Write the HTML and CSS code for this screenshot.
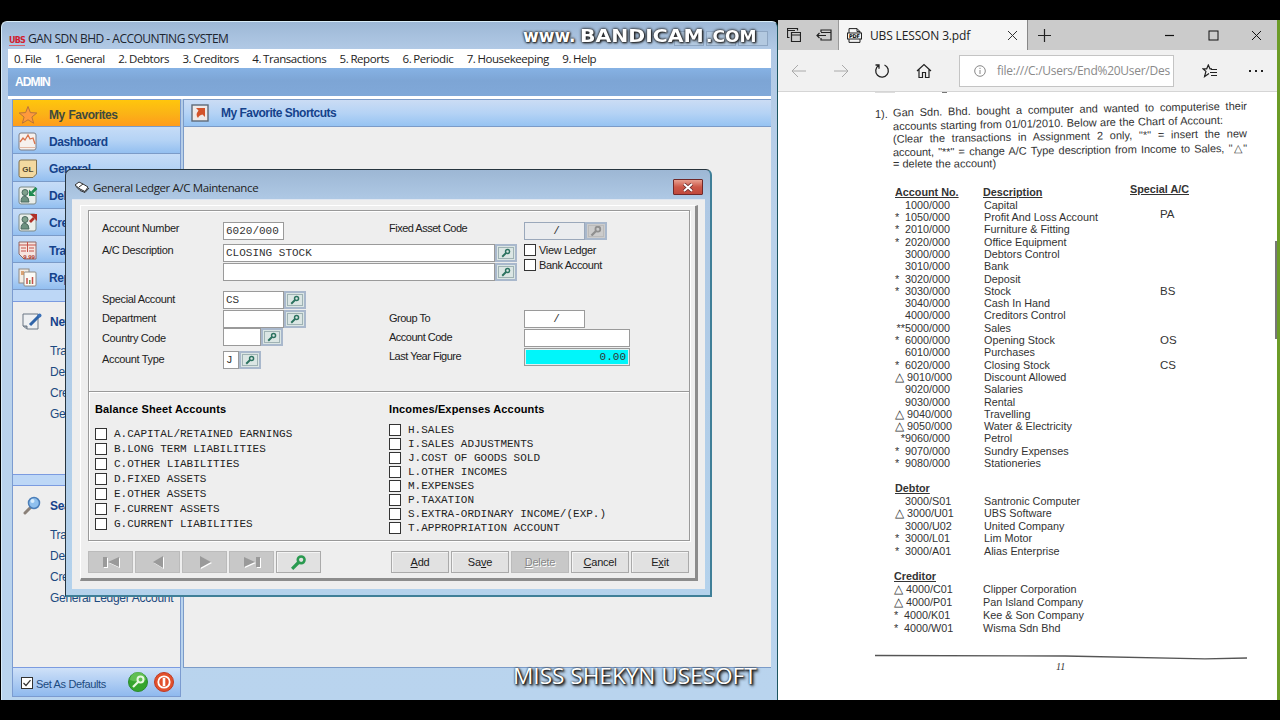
FILE: index.html
```html
<!DOCTYPE html>
<html lang="en">
<head>
  <meta charset="UTF-8" />
  <meta name="viewport" content="width=device-width, initial-scale=1.0" />
  <title>GAN SDN BHD - ACCOUNTING SYSTEM</title>
  <link rel="stylesheet" href="styles.css">
</head>
<body>

  <!-- Shared icons -->
  <svg class="defs" width="0" height="0">
    <symbol id="key" viewBox="0 0 16 16">
      <circle cx="10.5" cy="5.5" r="3.2" fill="none" stroke="currentColor" stroke-width="2.4" />
      <path d="M8 8 L2 14" fill="none" stroke="currentColor" stroke-width="3" />
    </symbol>
  </svg>

  <!-- Accounting window -->
  <div class="app">
    <div class="app-title">
      <span class="ubs">UBS</span>
      <span class="app-name">GAN SDN BHD - ACCOUNTING SYSTEM</span>
      <span class="win-buttons"><i></i><i></i><i></i></span>
    </div>
    <div class="menu">
      <span>0. File</span>
      <span>1. General</span>
      <span>2. Debtors</span>
      <span>3. Creditors</span>
      <span>4. Transactions</span>
      <span>5. Reports</span>
      <span>6. Periodic</span>
      <span>7. Housekeeping</span>
      <span>9. Help</span>
    </div>
    <div class="admin">ADMIN</div>
    <div class="workspace">
      <div class="sidebar">
        <div class="nav active">
          <svg width="20" height="20" viewBox="0 0 20 20"><path d="M10 1.5 L12.4 7.6 L18.8 8 L13.9 12 L15.6 18.2 L10 14.8 L4.4 18.2 L6.1 12 L1.2 8 L7.6 7.6 Z" fill="#ff9a3c" stroke="#b8743a" /></svg>
          My Favorites
        </div>
        <div class="nav">
          <svg width="20" height="20" viewBox="0 0 20 20"><rect x="1" y="1" width="17" height="17" rx="2" fill="#f6f1ee" stroke="#7d7f88" /><path d="M2 10 L5 6 L7 8 L10 3 L12 7 L15 6 L17 12" fill="none" stroke="#d9734c" stroke-width="1.3" /><path d="M2 15.5 H17" stroke="#e3b9a5" /></svg>
          Dashboard
        </div>
        <div class="nav">
          <svg width="20" height="20" viewBox="0 0 20 20"><path d="M3 1 H18.5 V15 L15 18.5 H3 Q1 18.5 1 16.5 V3 Q1 1 3 1 Z" fill="#f3d9a0" stroke="#80714f" /><text x="9.8" y="12.5" text-anchor="middle" class="gl">GL</text></svg>
          General
        </div>
        <div class="nav">
          <svg width="20" height="20" viewBox="0 0 20 20"><rect x="1" y="1" width="17" height="17" rx="2" fill="#e9eeea" stroke="#7d8a88" /><circle cx="7" cy="6.5" r="3" fill="#7fa08c" stroke="#4b6a60" /><path d="M3 16 Q3 10 7 10 Q11 11 11 16 Z" fill="#6d9180" stroke="#4b6a60" /><path d="M18.5 2 L14 6.5" stroke="#1f8a50" stroke-width="2.6" /><path d="M11 3.5 V10 H17.5 Z" fill="#1f8a50" /></svg>
          Debtors
        </div>
        <div class="nav">
          <svg width="20" height="20" viewBox="0 0 20 20"><rect x="1" y="1" width="17" height="17" rx="2" fill="#e9eeea" stroke="#7d8a88" /><circle cx="7" cy="6.5" r="3" fill="#7fa08c" stroke="#4b6a60" /><path d="M3 16 Q3 10 7 10 Q11 11 11 16 Z" fill="#6d9180" stroke="#4b6a60" /><path d="M12 9 L16 5" stroke="#b03028" stroke-width="2.6" /><path d="M12 1 H19 V8 Z" fill="#b03028" /></svg>
          Creditors
        </div>
        <div class="nav">
          <svg width="20" height="20" viewBox="0 0 20 20"><path d="M1 1 H18 V18 H6 L1 13 Z" fill="#f6e5e0" stroke="#8d6a68" /><path d="M1 4 H18 M9.5 1 V11 M3 7 H8 M11 7 H16 M3 10 H8 M11 10 H16" stroke="#c4524a" /><text x="11" y="17.5" text-anchor="middle" class="num">9.99</text></svg>
          Transactions
        </div>
        <div class="nav">
          <svg width="20" height="20" viewBox="0 0 20 20"><rect x="1" y="1" width="10" height="14" fill="#f5eee6" stroke="#8f8a84" /><rect x="6" y="4" width="12" height="14" rx="1" fill="#fbfaf6" stroke="#8f8a84" /><path d="M3 4 H6 M3 6 H6" stroke="#d08a50" stroke-width="1.5" /><path d="M9 16 V10 M14.5 16 V9" stroke="#c4524a" stroke-width="1.5" /><path d="M11.8 16 V12" stroke="#6b9a50" stroke-width="1.5" /></svg>
          Reports
        </div>
        <div class="band"></div>
        <div class="links new">
          <div class="links-head">
            <svg width="22" height="20" viewBox="0 0 22 20"><path d="M2 2 H17 V17 H6 L2 14 Z" fill="#eef0f2" stroke="#6a7684" /><path d="M2 14 H6 V17" fill="#99a3ad" stroke="#6a7684" /><path d="M9 13 L18 4" stroke="#2f64a8" stroke-width="3" /><circle cx="18.5" cy="3.5" r="2" fill="#3d72b8" /></svg>
            New
          </div>
          <span>Transactions</span>
          <span>Debtor</span>
          <span>Creditor</span>
          <span>General</span>
        </div>
        <div class="band low"></div>
        <div class="links search">
          <div class="links-head">
            <svg width="22" height="20" viewBox="0 0 22 20"><path d="M4 17 L10 11" stroke="#8a8078" stroke-width="3" stroke-linecap="round" /><circle cx="13" cy="7" r="5.5" fill="#8fc0ee" stroke="#4b7eb8" stroke-width="1.5" /><circle cx="11.5" cy="5" r="2" fill="#d8ecfc" /></svg>
            Search
          </div>
          <span>Transactions</span>
          <span>Debtor</span>
          <span>Creditor</span>
          <span>General Ledger Account</span>
        </div>
        <div class="defaults">
          <svg class="tick" width="12" height="12" viewBox="0 0 12 12"><rect x=".5" y=".5" width="11" height="11" fill="#fff" stroke="#333" /><path d="M2.5 6 L5 8.5 L9.5 3.2" fill="none" stroke="#333" stroke-width="1.2" /></svg>
          <span class="defaults-text">Set As Defaults</span>
          <svg width="20" height="20" viewBox="0 0 20 20"><circle cx="10" cy="10" r="9.5" fill="#35a52c" stroke="#2a8a30" /><path d="M2 8 A8 8 0 0 1 18 8 Q10 11 2 8" fill="#7fd06c" opacity=".6" /><circle cx="12.5" cy="7.5" r="3" fill="none" stroke="#e8f8e0" stroke-width="2" /><path d="M10.3 9.7 L5 15" stroke="#e8f8e0" stroke-width="2.2" /></svg>
          <svg width="20" height="20" viewBox="0 0 20 20"><circle cx="10" cy="10" r="9.5" fill="#e2502c" stroke="#c03a24" /><circle cx="10" cy="10" r="5.7" fill="none" stroke="#fff" stroke-width="1.8" /><path d="M10 6 V14" stroke="#fff" stroke-width="2.6" /></svg>
        </div>
      </div>
      <div class="main">
        <div class="main-head">
          <svg width="18" height="18" viewBox="0 0 18 18"><rect x="1" y="1" width="16" height="16" fill="#efe9e8" stroke="#5f6a78" stroke-width="1.4" /><path d="M5 4 H14 V13 L11.5 10.5 Q8 11 7 14 Q4 11 7.5 6.6 Z" fill="#d3532a" /></svg>
          My Favorite Shortcuts
        </div>
      </div>
    </div>
  </div>

  <!-- General Ledger dialog -->
  <div class="dialog">
    <div class="dialog-title">
      <svg width="16" height="12" viewBox="0 0 16 12"><path d="M1 4 L5 1 L9 3 L14 6 L11 10.5 L6 8 Z" fill="#fff" stroke="#333" /><path d="M5 6 L9 3 M2 5.5 L6 9.5 L11 11.5 L15 7" fill="none" stroke="#333" /></svg>
      <span>General Ledger A/C Maintenance</span>
      <div class="close"><svg width="12" height="9" viewBox="0 0 12 9"><path d="M2 1 L10 8 M10 1 L2 8" stroke="#6b2a2a" stroke-width="3.6" /><path d="M2 1 L10 8 M10 1 L2 8" stroke="#fff" stroke-width="2" /></svg></div>
    </div>
    <div class="dialog-body">
      <div class="panel">
        <div class="frame">
          <div class="form">
            <label class="l1">Account Number</label>
            <div class="row"><div class="field w61">6020/000</div></div>
            <label class="l1 c3">Fixed Asset Code</label>
            <div class="row"><div class="field w61 off center">/</div><div class="find off"><svg width="12" height="12"><use href="#key" /></svg></div></div>

            <label class="l2">A/C Description</label>
            <div class="row wide"><div class="field grow">CLOSING STOCK</div><div class="find"><svg width="10" height="10"><use href="#key" /></svg></div></div>
            <div class="flags">
              <div><i class="box"></i>View Ledger</div>
              <div><i class="box"></i>Bank Account</div>
            </div>
            <div class="row wide second"><div class="field grow"></div><div class="find"><svg width="10" height="10"><use href="#key" /></svg></div></div>

            <label class="l4">Special Account</label>
            <div class="row r4"><div class="field w61">CS</div><div class="find"><svg width="10" height="10"><use href="#key" /></svg></div></div>
            <label class="l5">Department</label>
            <div class="row r5"><div class="field w61"></div><div class="find"><svg width="10" height="10"><use href="#key" /></svg></div></div>
            <label class="l6">Country Code</label>
            <div class="row r6"><div class="field w38"></div><div class="find"><svg width="10" height="10"><use href="#key" /></svg></div></div>
            <label class="l7">Account Type</label>
            <div class="row r7"><div class="field w16">J</div><div class="find"><svg width="10" height="10"><use href="#key" /></svg></div></div>

            <div class="group">
              <label>Group To</label><div class="field w61 center">/</div>
              <label>Account Code</label><div class="field w106"></div>
              <label>Last Year Figure</label><div class="field w106 figure">0.00</div>
            </div>
          </div>
          <div class="types">
            <div class="balance">
              <h3>Balance Sheet Accounts</h3>
              <div><i class="box"></i>A.CAPITAL/RETAINED EARNINGS</div>
              <div><i class="box"></i>B.LONG TERM LIABILITIES</div>
              <div><i class="box"></i>C.OTHER LIABILITIES</div>
              <div><i class="box"></i>D.FIXED ASSETS</div>
              <div><i class="box"></i>E.OTHER ASSETS</div>
              <div><i class="box"></i>F.CURRENT ASSETS</div>
              <div><i class="box"></i>G.CURRENT LIABILITIES</div>
            </div>
            <div class="income">
              <h3>Incomes/Expenses Accounts</h3>
              <div><i class="box"></i>H.SALES</div>
              <div><i class="box"></i>I.SALES ADJUSTMENTS</div>
              <div><i class="box"></i>J.COST OF GOODS SOLD</div>
              <div><i class="box"></i>L.OTHER INCOMES</div>
              <div><i class="box"></i>M.EXPENSES</div>
              <div><i class="box"></i>P.TAXATION</div>
              <div><i class="box"></i>S.EXTRA-ORDINARY INCOME/(EXP.)</div>
              <div><i class="box"></i>T.APPROPRIATION ACCOUNT</div>
            </div>
          </div>
        </div>
        <div class="buttons">
          <div class="btn nav-btn"><svg width="20" height="12" viewBox="0 0 20 12"><path d="M2 1 H6 V11 H2 Z M18 1 V11 L7 6 Z" /></svg></div>
          <div class="btn nav-btn"><svg width="20" height="12" viewBox="0 0 20 12"><path d="M15 0 V12 L5 6 Z" /></svg></div>
          <div class="btn nav-btn"><svg width="20" height="12" viewBox="0 0 20 12"><path d="M5 0 V12 L16 6 Z" /></svg></div>
          <div class="btn nav-btn"><svg width="20" height="12" viewBox="0 0 20 12"><path d="M18 1 H14 V11 H18 Z M2 1 V11 L13 6 Z" /></svg></div>
          <div class="btn key-btn"><svg width="17" height="17"><use href="#key" /></svg></div>
          <div class="btn first"><span><u>A</u>dd</span></div>
          <div class="btn"><span>Sa<u>v</u>e</span></div>
          <div class="btn disabled"><span><u>D</u>elete</span></div>
          <div class="btn"><span><u>C</u>ancel</span></div>
          <div class="btn"><span>E<u>x</u>it</span></div>
        </div>
      </div>
    </div>
  </div>

  <!-- Browser with the lesson -->
  <div class="browser">
    <div class="tabs">
      <div class="tab-tools">
        <svg width="14" height="14" viewBox="0 0 14 14"><path d="M2.5 9.5 H.5 V.5 H10.5 V2.5 M.5 2.5 H8 M4.5 4.5 H13.5 V13.5 H4.5 Z M4.5 7 H13.5" fill="none" stroke="#222" stroke-width="1.2" /></svg>
        <svg width="16" height="12" viewBox="0 0 16 12"><path d="M5 3 V1 H15 V11 H5 V9 M5 3.5 H15 M1 6.5 H10 M3.5 4 L1 6.5 L3.5 9" fill="none" stroke="#222" stroke-width="1.2" /></svg>
      </div>
      <div class="tab">
        <svg width="15" height="15" viewBox="0 0 15 15"><path d="M2 5 V.6 H10 L13 3.6 V5 M2 11 V14.4 H13 V11 M10 .6 V3.6 H13" fill="none" stroke="#222" /><rect x=".5" y="5" width="14" height="6" fill="#f5f5f5" stroke="#222" /><text x="7.5" y="10" text-anchor="middle" class="pdf">PDF</text></svg>
        <span>UBS LESSON 3.pdf</span>
        <svg class="x" width="11" height="11" viewBox="0 0 11 11"><path d="M1 1 L10 10 M10 1 L1 10" stroke="#333" /></svg>
      </div>
      <svg class="plus" width="13" height="13" viewBox="0 0 13 13"><path d="M6.5 0 V13 M0 6.5 H13" stroke="#222" stroke-width="1.2" /></svg>
      <div class="win">
        <svg width="11" height="11" viewBox="0 0 11 11"><path d="M1 5.5 H10" stroke="#111" stroke-width="1.2" /></svg>
        <svg width="11" height="11" viewBox="0 0 11 11"><rect x="1" y="1" width="9" height="9" fill="none" stroke="#111" /></svg>
        <svg width="11" height="11" viewBox="0 0 11 11"><path d="M1 1 L10 10 M10 1 L1 10" stroke="#111" /></svg>
      </div>
    </div>
    <div class="toolbar">
      <svg width="16" height="14" viewBox="0 0 16 14"><path d="M15 7 H1 M7 1 L1 7 L7 13" fill="none" stroke="#aaa" /></svg>
      <svg width="16" height="14" viewBox="0 0 16 14"><path d="M1 7 H15 M9 1 L15 7 L9 13" fill="none" stroke="#aaa" /></svg>
      <svg width="16" height="16" viewBox="0 0 16 16"><path d="M10.5 2 A6.3 6.3 0 1 1 4.6 2.5 M1.5 2 H5 V5.7" fill="none" stroke="#222" stroke-width="1.3" /></svg>
      <svg width="16" height="16" viewBox="0 0 16 16"><path d="M1 8 L8 1.5 L15 8 M3 6.5 V14.5 H6.5 V9.5 H9.5 V14.5 H13 V6.5" fill="none" stroke="#222" stroke-width="1.2" /></svg>
      <div class="address">
        <svg width="12" height="12" viewBox="0 0 12 12"><circle cx="6" cy="6" r="5.3" fill="none" stroke="#888" /><path d="M6 5 V9 M6 2.8 V4" stroke="#888" /></svg>
        <span>file:///C:/Users/End%20User/Des</span>
      </div>
      <svg class="fav" width="16" height="14" viewBox="0 0 16 14"><path d="M10 4.8 H8 L6.3 1 L4.7 4.8 H1 L3.9 7.4 L2.6 12.5 L7 9.5" fill="none" stroke="#222" stroke-width="1.2" /><path d="M9 5.5 H15 M8 8.5 H15 M9 11.5 H15" stroke="#222" stroke-width="1.2" /></svg>
      <span class="dots"><i></i><i></i><i></i></span>
    </div>
    <div class="page">
      <div class="cut"><i></i><i></i></div>
      <div class="question">
        <span class="no">1).</span>
        <div class="lines">
          <p class="p1">Gan Sdn. Bhd. bought a computer and wanted to computerise their</p>
          <p class="p2">accounts starting from 01/01/2010. Below are the Chart of Account:</p>
          <p class="p3">(Clear the transactions in Assignment 2 only, "*" = insert the new</p>
          <p class="p4">account, "**" = change A/C Type description from Income to Sales, "△"</p>
          <p class="p5">= delete the account)</p>
        </div>
      </div>
      <div class="accounts chart">
        <div class="acc head"><b></b><b><u>Account No.</u></b><b><u>Description</u></b><b class="special"><u>Special A/C</u></b></div>
        <div class="acc"><i></i><span>1000/000</span><span>Capital</span></div>
        <div class="acc"><i>*</i><span>1050/000</span><span>Profit And Loss Account</span><span class="code pa">PA</span></div>
        <div class="acc"><i>*</i><span>2010/000</span><span>Furniture &amp; Fitting</span></div>
        <div class="acc"><i>*</i><span>2020/000</span><span>Office Equipment</span></div>
        <div class="acc"><i></i><span>3000/000</span><span>Debtors Control</span></div>
        <div class="acc"><i></i><span>3010/000</span><span>Bank</span></div>
        <div class="acc"><i>*</i><span>3020/000</span><span>Deposit</span></div>
        <div class="acc"><i>*</i><span>3030/000</span><span>Stock</span><span class="code">BS</span></div>
        <div class="acc"><i></i><span>3040/000</span><span>Cash In Hand</span></div>
        <div class="acc"><i></i><span>4000/000</span><span>Creditors Control</span></div>
        <div class="acc"><i class="tight">**</i><span>5000/000</span><span>Sales</span></div>
        <div class="acc"><i>*</i><span>6000/000</span><span>Opening Stock</span><span class="code">OS</span></div>
        <div class="acc"><i></i><span>6010/000</span><span>Purchases</span></div>
        <div class="acc"><i>*</i><span>6020/000</span><span>Closing Stock</span><span class="code">CS</span></div>
        <div class="acc"><i class="tri">△</i><span>9010/000</span><span>Discount Allowed</span></div>
        <div class="acc"><i></i><span>9020/000</span><span>Salaries</span></div>
        <div class="acc"><i></i><span>9030/000</span><span>Rental</span></div>
        <div class="acc"><i class="tri">△</i><span>9040/000</span><span>Travelling</span></div>
        <div class="acc"><i class="tri">△</i><span>9050/000</span><span>Water &amp; Electricity</span></div>
        <div class="acc"><i class="tight">*</i><span>9060/000</span><span>Petrol</span></div>
        <div class="acc"><i>*</i><span>9070/000</span><span>Sundry Expenses</span></div>
        <div class="acc"><i>*</i><span>9080/000</span><span>Stationeries</span></div>
      </div>
      <div class="accounts debtor">
        <div class="acc head"><b></b><b><u>Debtor</u></b></div>
        <div class="acc"><i></i><span>3000/S01</span><span>Santronic Computer</span></div>
        <div class="acc"><i class="tri">△</i><span>3000/U01</span><span>UBS Software</span></div>
        <div class="acc"><i></i><span>3000/U02</span><span>United Company</span></div>
        <div class="acc"><i>*</i><span>3000/L01</span><span>Lim Motor</span></div>
        <div class="acc"><i>*</i><span>3000/A01</span><span>Alias Enterprise</span></div>
      </div>
      <div class="accounts creditor">
        <div class="acc head"><b></b><b><u>Creditor</u></b></div>
        <div class="acc"><i class="tri">△</i><span>4000/C01</span><span>Clipper Corporation</span></div>
        <div class="acc"><i class="tri">△</i><span>4000/P01</span><span>Pan Island Company</span></div>
        <div class="acc"><i>*</i><span>4000/K01</span><span>Kee &amp; Son Company</span></div>
        <div class="acc"><i>*</i><span>4000/W01</span><span>Wisma Sdn Bhd</span></div>
      </div>
      <svg class="rule" width="373" height="6" viewBox="0 0 373 6"><path d="M0 1.5 L190 2 L330 4.8 L372 4" fill="none" stroke="#555" stroke-width="1.3" /></svg>
      <div class="page-no">11</div>
    </div>
    <div class="scroll"></div>
  </div>

  <!-- Watermarks -->
  <div class="bandicam"><span class="www">www.</span><span class="name">BANDICAM</span><span class="com">.COM</span></div>
  <div class="caption">MISS SHEKYN USESOFT</div>

</body>
</html>
```
FILE: styles.css
```css
* {
  box-sizing: border-box;
}

body {
  margin: 0;
  width: 1280px;
  height: 720px;
  position: relative;
  overflow: hidden;
  background: #000;
  font-family: "Liberation Sans", Arial, sans-serif;
  font-size: 11px;
  color: #222;
  white-space: nowrap;
}

i {
  font-style: normal;
}

svg {
  flex: none;
}

.defs {
  position: absolute;
}

/* Accounting window */
.app {
  position: absolute;
  left: 1px;
  top: 21px;
  width: 777px;
  height: 679px;
  padding: 0 6px 0 6px;
  background: linear-gradient(#9db8d6, #b2cae6 28px, #b9d1ea 200px, #b9d4ee);
  border: 1px solid #d8ecf8;
  border-right: 1px solid #1c5560;
  border-bottom: none;
  border-radius: 6px 6px 0 0;
  display: flex;
  flex-direction: column;
}

.app-title {
  height: 27px;
  display: flex;
  align-items: center;
  padding: 6px 0 0 1px;
  font-family: "Open Sans", "Noto Sans", sans-serif;
  font-size: 12px;
  color: #1d2530;
}

.ubs {
  width: 16px;
  height: 9px;
  margin-top: 5px;
  border-bottom: 1px solid #d8606a;
  color: #d0202e;
  font: bold 8px/8px "DejaVu Sans", sans-serif;
  letter-spacing: -0.8px;
}

.app-name {
  margin-left: 3px;
  letter-spacing: -0.5px;
}

.win-buttons {
  margin-left: auto;
  margin-right: 3px;
  display: flex;
  gap: 2px;
}

.win-buttons i {
  width: 30px;
  height: 15px;
  border: 1px solid #8ea6c2;
  background: #b3c9e0;
}

.menu {
  flex: none;
  height: 19px;
  background: #fff;
  display: flex;
  align-items: center;
  gap: 13.4px;
  padding-left: 6px;
  font-family: "Open Sans", "Noto Sans", sans-serif;
  font-size: 11.5px;
  letter-spacing: -0.43px;
  word-spacing: -0.5px;
}

.admin {
  flex: none;
  height: 28px;
  background: linear-gradient(#86b2e4, #7da5d5 45%, #80a8d8);
  color: #fff;
  font-size: 12px;
  font-weight: bold;
  line-height: 29px;
  padding-left: 7px;
  letter-spacing: -0.9px;
}

.workspace {
  flex: 1;
  display: flex;
  gap: 2px;
  padding: 2px 0 3px 4px;
  border-top: 1px solid #fff;
  background: linear-gradient(#fff 2px, transparent 2px);
}

.sidebar {
  width: 169px;
  border: 1px solid #7b9bd0;
  background: #eee;
  display: flex;
  flex-direction: column;
  color: #1c4a80;
}

.nav {
  flex: none;
  height: 27.2px;
  border-bottom: 1px solid #7b9bc8;
  background: linear-gradient(#c6dcf7, #b5d3f5 50%, #93bff0);
  display: flex;
  align-items: center;
  gap: 11px;
  padding: 3px 0 0 5px;
  font-size: 12px;
  font-weight: bold;
  letter-spacing: -0.45px;
  color: #15428b;
}

.nav.active {
  background: linear-gradient(#ffc60c, #fbb416 50%, #ff9c1c);
  color: #3f4a3c;
  letter-spacing: -0.5px;
  word-spacing: 1px;
}

.gl {
  font: bold 8px "Liberation Sans", sans-serif;
  letter-spacing: 0;
  fill: #4f4630;
}

.num {
  font: bold 6px "Liberation Sans", sans-serif;
  letter-spacing: 0;
  fill: #a83830;
}

.band {
  flex: none;
  height: 12px;
  background: #bdd7f6;
  border-bottom: 1px solid #7b9be0;
}

.band.low {
  border-top: 1px solid #7b9be0;
}

.links {
  height: 172px;
  padding-top: 9px;
  display: flex;
  flex-direction: column;
  font-size: 12px;
  letter-spacing: -0.28px;
}

.links.search {
  height: auto;
  flex: 1;
}

.links-head {
  height: 22px;
  display: flex;
  align-items: center;
  gap: 7px;
  padding-left: 8px;
  margin-bottom: 7.5px;
  font-weight: bold;
  color: #15428b;
}

.links span {
  padding-left: 37px;
  line-height: 21.2px;
}

.defaults {
  flex: none;
  height: 29px;
  border-top: 1px solid #7b9be0;
  background: linear-gradient(#cfe1f8, #8fb9ee);
  display: flex;
  align-items: center;
  padding-left: 8px;
}

.defaults-text {
  width: 92px;
  margin-left: 3px;
  padding-top: 3px;
  letter-spacing: -0.35px;
}

.defaults svg + svg {
  margin-left: 6px;
}

.tick {
  margin-top: 2px;
}

.main {
  flex: 1;
  margin-bottom: 29px;
  border: 1px solid #7b9bc8;
  border-right: none;
  background: #eee;
}

.main-head {
  height: 27px;
  border-bottom: 1px solid #7b9bc8;
  background: linear-gradient(#cbdcf4, #b5d3f5 50%, #96c3f2);
  display: flex;
  align-items: center;
  gap: 12px;
  padding-left: 7px;
  font-size: 12px;
  font-weight: bold;
  letter-spacing: -0.52px;
  color: #15428b;
}

/* General Ledger dialog */
.dialog {
  position: absolute;
  left: 65px;
  top: 169px;
  width: 647px;
  height: 428px;
  padding: 0 5px 6px 6px;
  border: 1px solid #26343e;
  border-right: 2px solid #3f7f98;
  border-bottom: 2px solid #3f7f98;
  border-radius: 6px 6px 0 0;
  background: linear-gradient(#9db7d4, #aec8e4 28px, #b4d2ec);
  display: flex;
  flex-direction: column;
}

.dialog-title {
  flex: none;
  height: 29px;
  padding: 5px 2px 0 2px;
  display: flex;
  align-items: center;
  gap: 3px;
  font-family: "Open Sans", "Noto Sans", sans-serif;
  font-size: 11.5px;
  letter-spacing: -0.38px;
}

.close {
  margin-left: auto;
  width: 30px;
  height: 16px;
  border: 1px solid #702828;
  border-radius: 1px;
  background: linear-gradient(#e8a090, #cc5848 50%, #c0483c);
  display: flex;
  align-items: center;
  justify-content: center;
}

.dialog-body {
  flex: 1;
  background: #eee;
  border-top: 1px solid #dfe6f0;
  padding: 5px 7px 8px 8px;
}

.panel {
  height: 376px;
  border: 1px solid #fff;
  border-right: 3px solid #8c8c8c;
  border-bottom: 3px solid #8c8c8c;
  padding: 4px 5px 0 7px;
  background: #eee;
}

.frame {
  height: 331px;
  border: 1px solid #999;
  box-shadow: inset 1px 1px 0 #fff, 1px 1px 0 #fff;
}

.form {
  height: 181px;
  border-bottom: 1px solid #999;
  box-shadow: 0 1px 0 #fff;
  padding: 11px 0 0 13px;
  display: grid;
  grid-template-columns: 121px 166px 135px 110px;
  grid-template-rows: 22px 19px 28px 19px 18px 23px 18px;
  align-items: start;
}

.form label,
.flags {
  line-height: 14px;
  letter-spacing: -0.35px;
}

.form label.c3,
.group label {
  letter-spacing: -0.5px;
}

.form .l1 {
  margin-top: -1px;
}

.l2 {
  margin-top: -1px;
}

.l4,
.l5,
.l7 {
  margin-top: 1px;
}

.l6 {
  margin-top: 3px;
}

.l4 { grid-area: 4 / 1; }
.l5 { grid-area: 5 / 1; }
.l6 { grid-area: 6 / 1; }
.l7 { grid-area: 7 / 1; }
.r4 { grid-area: 4 / 2; }
.r5 { grid-area: 5 / 2; }
.r6 { grid-area: 6 / 2; }
.r7 { grid-area: 7 / 2; }

.row {
  display: flex;
}

.row.wide {
  grid-column: 2 / 4;
  width: 294px;
}

.row.second {
  grid-row: 3;
}

.field {
  height: 18px;
  border: 1px solid #9a9a9a;
  background: #fff;
  font: 11px/17px "Liberation Mono", monospace;
  padding-left: 2px;
  color: #333;
}

.grow { flex: 1; }
.w61 { width: 61px; }
.w38 { width: 38px; }
.w16 { width: 16px; }
.w106 { width: 106px; }

.field.center {
  text-align: center;
  padding: 0 0 0 4px;
}

.field.off {
  background: #eaecef;
  border: 1px solid #9aa8bb;
}

.figure {
  background: #00f6fa;
  box-shadow: inset 0 0 0 1px #e0f0f0;
  text-align: right;
  padding-right: 3px;
}

.find {
  width: 22px;
  height: 18px;
  border: 2px solid #a9b8cc;
  background: #dbe6e4;
  outline: 1px solid #9fb2b4;
  outline-offset: -4px;
  color: #2c7360;
  display: flex;
  align-items: center;
  justify-content: center;
}

.find.off {
  background: #ccc;
  outline-color: #bbb;
  color: #8f8f8f;
}

.flags {
  grid-area: 2 / 4 / 4 / 5;
  margin-top: -2px;
}

.flags div {
  display: flex;
  align-items: center;
  gap: 3px;
  height: 15px;
}

.box {
  flex: none;
  width: 12px;
  height: 12px;
  border: 1px solid #333;
  background: #fff;
}

.group {
  grid-area: 5 / 3 / 8 / 5;
  display: grid;
  grid-template-columns: 135px 106px;
  row-gap: 1px;
}

.group label {
  margin-top: 1px;
}

.types {
  display: flex;
  padding: 10px 0 0 6px;
  font: 11px "Liberation Mono", monospace;
}

.types h3 {
  margin: 0;
  font: bold 11px/14px "Liberation Sans", sans-serif;
  letter-spacing: 0.15px;
  color: #000;
}

.types div div {
  display: flex;
  align-items: center;
  gap: 7px;
}

.balance {
  width: 294px;
}

.balance div {
  height: 15px;
}

.balance h3 {
  margin-bottom: 10px;
}

.income h3 {
  margin-bottom: 6.5px;
}

.income div {
  height: 14.1px;
}

.buttons {
  display: flex;
  padding: 10px 1px 0 0;
  gap: 2px;
  letter-spacing: -0.2px;
}

.btn {
  width: 58px;
  height: 22px;
  border: 1px solid #aaa;
  background: #e1e1e1;
  box-shadow: inset 1px 1px 0 #f4f4f4;
  display: flex;
  align-items: center;
  justify-content: center;
}

.btn.nav-btn,
.btn.key-btn {
  width: 45px;
}

.nav-btn,
.btn.disabled {
  background: #c8c8c8;
  border-color: #bbb;
  box-shadow: none;
  color: #888;
  text-shadow: 1px 1px 0 #fff;
}

.nav-btn svg {
  fill: #9a9a9a;
  filter: drop-shadow(1px 1px 0 #fff);
}

.key-btn {
  color: #2a9a50;
}

.btn.first {
  margin-left: auto;
}

/* Browser */
.browser {
  position: absolute;
  left: 778px;
  top: 20px;
  width: 502px;
  height: 680px;
  border-right: 3px solid #6c9c28;
  background: #fff;
  font-family: "Open Sans", "Noto Sans", sans-serif;
}

.tabs {
  height: 30px;
  background: #cbcbcb;
  display: flex;
  align-items: center;
}

.tab-tools {
  width: 61px;
  height: 30px;
  padding-left: 9px;
  border-right: 1px solid #999;
  display: flex;
  align-items: center;
  gap: 15px;
}

.tab {
  width: 189px;
  height: 30px;
  padding: 0 9px 0 8px;
  border-right: 1px solid #888;
  background: #f5f5f5;
  display: flex;
  align-items: center;
  gap: 8px;
  font-size: 12px;
  letter-spacing: -0.15px;
}

.pdf {
  font: bold 5px "DejaVu Sans", sans-serif;
}

.tab .x {
  margin-left: auto;
}

.plus {
  margin-left: 10px;
}

.win {
  margin-left: auto;
  margin-right: 15px;
  display: flex;
  gap: 32.5px;
}

.toolbar {
  height: 42px;
  border-bottom: 1px solid #d5d5d5;
  background: #f1f1f1;
  display: flex;
  align-items: center;
  padding-left: 13px;
  gap: 25.5px;
}

.address {
  width: 215px;
  height: 32px;
  margin-left: 2px;
  padding-left: 14px;
  border: 1px solid #c4c4c4;
  background: #fff;
  display: flex;
  align-items: center;
  gap: 11px;
  font-size: 12px;
  letter-spacing: -0.27px;
  color: #8a8a8a;
}

.fav {
  margin-left: 2px;
}

.dots {
  display: flex;
  gap: 4px;
  margin-left: 6px;
}

.dots i {
  width: 2px;
  height: 2px;
  background: #222;
}

.page {
  padding-left: 97px;
  font: 11px "Liberation Sans", sans-serif;
  color: #333;
}

.cut {
  height: 11px;
  display: flex;
  gap: 47px;
}

.cut i {
  width: 20px;
  height: 1px;
  background: #ddd;
}

.cut i + i {
  width: 5px;
  background: #777;
}

.question {
  display: flex;
}

.no {
  width: 18px;
  line-height: 23px;
}

.lines p {
  width: 354px;
  height: 13.5px;
  line-height: 13px;
  margin: 0;
  text-align-last: justify;
}

.lines .p1 { transform: rotate(-1.1deg); }
.lines .p2 { width: 330px; transform: rotate(-1.1deg); }
.lines .p3 { transform: rotate(-0.9deg); }
.lines .p4 { transform: rotate(-0.7deg); letter-spacing: -0.1px; }
.lines .p5 { text-align-last: left; transform: rotate(-0.2deg); }

.accounts {
  margin-top: 13px;
  padding-left: 19px;
  font-size: 10.8px;
}

.chart {
  margin-top: 15px;
}

.acc {
  display: grid;
  grid-template-columns: 11px 79px 146px 60px;
  height: 12.3px;
  line-height: 12px;
}

.chart .head {
  height: 13.3px;
}

.acc i {
  padding-left: 1px;
}

.acc .tight {
  text-align: right;
}

.acc .tri {
  font-size: 12px;
  padding-left: 1px;
}

.tri + span {
  padding-left: 2px;
}

.acc .code {
  padding-left: 30px;
  font-size: 11.5px;
}

.acc .pa {
  margin-top: -3px;
}

.acc.head b:nth-child(2) {
  margin-left: -10px;
}

.acc.head b:nth-child(3) {
  margin-left: -1px;
}

.acc.head .special {
  margin-top: -3px;
}

.debtor .acc {
  height: 12.5px;
}

.creditor {
  padding-left: 18px;
}

.creditor .acc {
  height: 12.9px;
}

.rule {
  display: block;
  margin-top: 19px;
}

.page-no {
  margin-left: 181px;
  font: italic 10px/14px "Liberation Serif", serif;
}

.scroll {
  position: absolute;
  right: 0;
  top: 221px;
  width: 2px;
  height: 98px;
  background: #777;
}

/* Watermarks */
.bandicam {
  position: absolute;
  left: 523px;
  top: 25px;
  display: flex;
  align-items: baseline;
  color: #fff;
  font: bold 18px/22px "DejaVu Sans", sans-serif;
  text-shadow: 0 0 2px #222, 0 0 3px #222, 1px 1px 2px #222;
}

.www {
  width: 57px;
  font-size: 17px;
}

.name {
  width: 126px;
  transform: scaleX(1.13);
  transform-origin: left;
}

.com {
  font-size: 15px;
  transform: scaleX(1.14);
  transform-origin: left;
}

.caption {
  position: absolute;
  left: 513px;
  top: 660px;
  color: #fff;
  font: 22.6px/32px "Open Sans", "Noto Sans", sans-serif;
  text-shadow: 0 0 2px #111, 1px 1px 2px #111, 2px 2px 3px #222;
}
```
